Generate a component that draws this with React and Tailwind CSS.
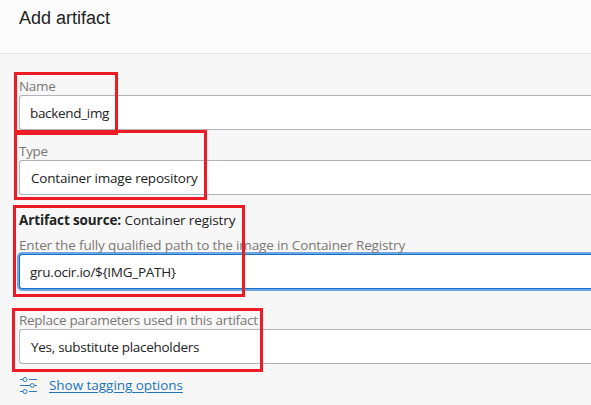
const box = "absolute border-[3px] border-[#ed1c24]";

function Field({ label, value, labelClass, valueClass, focused }) {
  return (
    <label className="block">
      <span className={`block h-[18px] whitespace-nowrap leading-[18px] text-[#7a7876] ${labelClass}`}>{label}</span>
      <span
        className={`flex h-[35px] items-center rounded-l-[3px] border border-r-0 bg-white pt-[2px] whitespace-nowrap text-[#222] ${
          focused ? "border-[#1373cc] ring-2 ring-[#6fa6e0]" : "border-[#aeb4be]"
        } ${valueClass}`}
      >
        {value}
      </span>
    </label>
  );
}

function SlidersIcon() {
  return (
    <svg width="18" height="18" viewBox="0 0 18 18" fill="none" stroke="#2b7bc0" strokeWidth="1">
      <path d="M1 3.5H4M10 3.5H18M1 9.5H11M15.5 9.5H18M1 15.5H4M10 15.5H18" />
      <circle cx="6" cy="3.5" r="2" />
      <circle cx="13.3" cy="9.5" r="2" />
      <circle cx="6" cy="15.5" r="2" />
    </svg>
  );
}

export default function App() {
  return (
    <div className="relative h-[405px] w-[591px] overflow-hidden bg-[#f7f7f7] font-['Open_Sans','Noto_Sans',sans-serif] text-[13.5px]">
      <header className="h-[54px] border-b border-[#e4e4e4] bg-[#fcfcfc] pt-[6px] pl-[19px]">
        <h1 className="font-['Liberation_Sans',Arial,sans-serif] text-[18px] leading-[24px] text-[#222]">Add artifact</h1>
      </header>
      <main className="pt-[23px] pl-[19px]">
        <Field label="Name" value="backend_img" labelClass="tracking-[-0.3px]" valueClass="pl-[10px] tracking-[-0.32px]" />
        <div className="mt-3">
          <Field label="Type" value="Container image repository" labelClass="tracking-[-0.3px]" valueClass="pl-[11px] tracking-[-0.2px]" />
        </div>
        <p className="mt-[16px] h-[18px] leading-[18px] text-[#222]">
          <strong className="tracking-[-0.12px]">Artifact source:</strong> <span className="tracking-[-0.12px]">Container registry</span>
        </p>
        <div className="mt-[7px]">
          <Field
            focused
            label="Enter the fully qualified path to the image in Container Registry"
            value="gru.ocir.io/${IMG_PATH}"
            labelClass="tracking-[-0.14px]"
            valueClass="pl-[10px] tracking-[-0.26px]"
          />
        </div>
        <div className="mt-[22px]">
          <Field label="Replace parameters used in this artifact" value="Yes, substitute placeholders" labelClass="tracking-[-0.27px]" valueClass="pl-[11px] tracking-[-0.28px]" />
        </div>
        <div className="mt-3 flex items-center gap-3">
          <SlidersIcon />
          <a className="leading-[18px] tracking-[-0.04px] text-[#1b74ba] underline underline-offset-2">Show tagging options</a>
        </div>
      </main>
      <div className={`${box} top-[72px] left-[14px] h-[63px] w-[104px]`} />
      <div className={`${box} top-[130px] left-[14px] h-[70px] w-[193px]`} />
      <div className={`${box} top-[205px] left-[13px] h-[92px] w-[232px]`} />
      <div className={`${box} top-[308px] left-[12px] h-[64px] w-[251px]`} />
    </div>
  );
}
